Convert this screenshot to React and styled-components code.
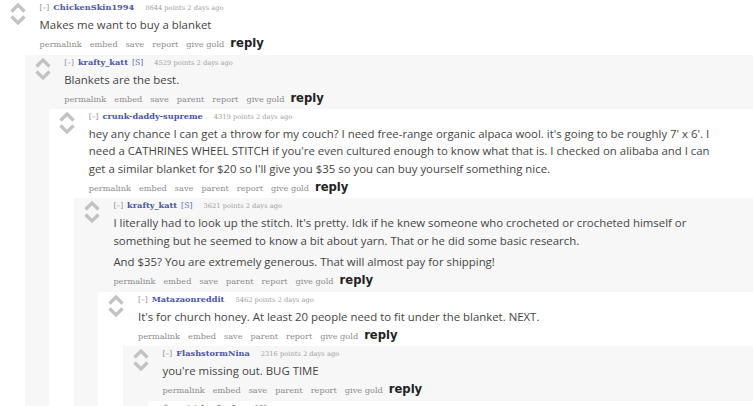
import React from 'react'
import styled, { createGlobalStyle } from 'styled-components'

const Global = createGlobalStyle`
html, body {
  margin: 0;
  padding: 0;
  background: #fff;
  overflow: hidden;
}
`

const Page = styled.div`
width: 753px;
height: 406px;
overflow: hidden;
`

const Box = styled.div`
background: ${p => (p.$shaded ? '#f7f7f8' : '#ffffff')};
`

const Row = styled.div`
display: flex;
`

const Votes = styled.div`
flex: none;
width: 39.6px;
box-sizing: border-box;
padding: 3px 0 0 10px;
display: flex;
flex-direction: column;
gap: 2px;
`

const Entry = styled.div`
flex: 1;
min-width: 0;
padding: 1px 26px 3.3px 0;
`

const Tagline = styled.div`
font-family: "DejaVu Serif", serif;
font-size: 6.7px;
line-height: 12px;
color: #8a8a8a;
white-space: nowrap;
`

const Toggle = styled.span`
font-size: 7.6px;
color: #8f8f8f;
margin-right: 4px;
`

const Author = styled.span`
font-size: 8.2px;
color: #4a56a3;
font-weight: 700;
`

const Submitter = styled.span`
font-size: 7.8px;
color: #5b6bb8;
margin-left: 4px;
`

const Score = styled.span`
color: #a0a0a0;
margin-left: 11px;
`

const Body = styled.div`
margin-top: 2px;
font-family: "Open Sans", "Noto Sans", sans-serif;
font-size: 11.4px;
line-height: 17.3px;
color: #444;
`

const Para = styled.p`
margin: 0;
& + & {
  margin-top: 4px;
}
`

const Buttons = styled.ul`
list-style: none;
margin: 2px 0 0;
padding: 0;
display: flex;
align-items: baseline;
height: 16px;
line-height: 16px;
`

const Button = styled.li`
font-family: "DejaVu Serif", serif;
font-size: 8.2px;
color: #8a8a8a;
margin-right: 8px;
white-space: nowrap;
`

const Reply = styled.li`
font-family: "DejaVu Sans", sans-serif;
font-weight: 700;
font-size: 11.6px;
color: #222;
margin-left: -2px;
`

const Children = styled.div`
margin-left: 24.6px;
`

const Arrow = ({ up }) => (
  <svg width="16" height="10" viewBox="0 0 16 10">
    <polyline
      points={up ? '1.5,8.5 8,2 14.5,8.5' : '1.5,1.5 8,8 14.5,1.5'}
      fill="none"
      stroke="#c2c2c4"
      strokeWidth="3.2"
      strokeLinecap="butt"
      strokeLinejoin="miter"
    />
  </svg>
)

const Comment = ({ level, author, op, points, paras, parent, children }) => (
  <Box $shaded={level % 2 === 1}>
    <Row>
      <Votes>
        <Arrow up />
        <Arrow />
      </Votes>
      <Entry>
        <Tagline>
          <Toggle>[–]</Toggle>
          <Author>{author}</Author>
          {op && <Submitter>[S]</Submitter>}
          <Score>{points} points 2 days ago</Score>
        </Tagline>
        <Body>
          {paras.map((t, i) => (
            <Para key={i}>{t}</Para>
          ))}
        </Body>
        <Buttons>
          <Button>permalink</Button>
          <Button>embed</Button>
          <Button>save</Button>
          {parent && <Button>parent</Button>}
          <Button>report</Button>
          <Button>give gold</Button>
          <Reply>reply</Reply>
        </Buttons>
      </Entry>
    </Row>
    {children && <Children>{children}</Children>}
  </Box>
)

export default function App() {
  return (
    <Page>
      <Global />
      <Comment level={0} author="ChickenSkin1994" points="8644" paras={['Makes me want to buy a blanket']}>
        <Comment level={1} author="krafty_katt" op points="4529" parent paras={['Blankets are the best.']}>
          <Comment
            level={2}
            author="crunk-daddy-supreme"
            points="4319"
            parent
            paras={[
              "hey any chance I can get a throw for my couch? I need free-range organic alpaca wool. it's going to be roughly 7' x 6'. I need a CATHRINES WHEEL STITCH if you're even cultured enough to know what that is. I checked on alibaba and I can get a similar blanket for $20 so I'll give you $35 so you can buy yourself something nice.",
            ]}
          >
            <Comment
              level={3}
              author="krafty_katt"
              op
              points="3621"
              parent
              paras={[
                "I literally had to look up the stitch. It's pretty. Idk if he knew someone who crocheted or crocheted himself or something but he seemed to know a bit about yarn. That or he did some basic research.",
                'And $35? You are extremely generous. That will almost pay for shipping!',
              ]}
            >
              <Comment
                level={4}
                author="Matazaonreddit"
                points="5462"
                parent
                paras={["It's for church honey. At least 20 people need to fit under the blanket. NEXT."]}
              >
                <Comment
                  level={5}
                  author="FlashstormNina"
                  points="2316"
                  parent
                  paras={["you're missing out. BUG TIME"]}
                >
                  <Comment
                    level={6}
                    author="krafty_katt"
                    op
                    points="1987"
                    parent
                    paras={['Bugs are not included.']}
                  />
                </Comment>
              </Comment>
            </Comment>
          </Comment>
        </Comment>
      </Comment>
    </Page>
  )
}
